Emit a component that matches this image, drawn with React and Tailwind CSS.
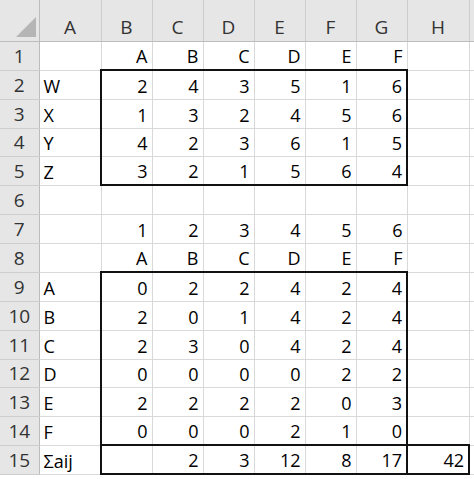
import React from "react";

const cols = ["A", "B", "C", "D", "E", "F", "G", "H", ""];
const colWidths = [
  "w-[39px]",
  "w-[62px]",
  "w-[51px]",
  "w-[51px]",
  "w-[51px]",
  "w-[51px]",
  "w-[51px]",
  "w-[51px]",
  "w-[62px]",
  "w-[60px]",
];
const rowHeights = [
  "h-[29px]", "h-[29px]", "h-[29px]", "h-[28px]", "h-[29px]",
  "h-[29px]", "h-[29px]", "h-[29px]", "h-[29px]", "h-[29px]",
  "h-[29px]", "h-[28px]", "h-[29px]", "h-[29px]", "h-[29px]",
];

const rows = [
  ["", "A", "B", "C", "D", "E", "F", "", ""],
  ["W", "2", "4", "3", "5", "1", "6", "", ""],
  ["X", "1", "3", "2", "4", "5", "6", "", ""],
  ["Y", "4", "2", "3", "6", "1", "5", "", ""],
  ["Z", "3", "2", "1", "5", "6", "4", "", ""],
  ["", "", "", "", "", "", "", "", ""],
  ["", "1", "2", "3", "4", "5", "6", "", ""],
  ["", "A", "B", "C", "D", "E", "F", "", ""],
  ["A", "0", "2", "2", "4", "2", "4", "", ""],
  ["B", "2", "0", "1", "4", "2", "4", "", ""],
  ["C", "2", "3", "0", "4", "2", "4", "", ""],
  ["D", "0", "0", "0", "0", "2", "2", "", ""],
  ["E", "2", "2", "2", "2", "0", "3", "", ""],
  ["F", "0", "0", "0", "2", "1", "0", "", ""],
  ["Σaij", "", "2", "3", "12", "8", "17", "42", ""],
];

// box ranges: [r1, r2, c1, c2]
const boxes = [
  [2, 5, 1, 6],
  [9, 14, 1, 6],
  [15, 15, 1, 6],
  [15, 15, 7, 7],
];

function boxClasses(r, c) {
  const out = [];
  for (const [r1, r2, c1, c2] of boxes) {
    if (r >= r1 && r <= r2 && c >= c1 && c <= c2) {
      if (r === r1) out.push("border-t-2 border-t-[#111]");
      if (r === r2) out.push("border-b-2 border-b-[#111]");
      if (c === c1) out.push("border-l-2 border-l-[#111]");
      if (c === c2) out.push("border-r-2 border-r-[#111]");
    }
  }
  return out.join(" ");
}

export default function App() {
  return (
    <div className="w-[474px] h-[479px] overflow-hidden bg-white font-['Open_Sans','Noto_Sans',sans-serif]">
      <table className="border-collapse table-fixed w-[528px]">
        <colgroup>
          {colWidths.map((w, i) => (
            <col key={i} className={w} />
          ))}
        </colgroup>
        <thead>
          <tr className="h-[41px]">
            <th className="bg-[#e6e6e6] border-r border-b border-r-[#bcbcbc] border-b-[#bcbcbc] p-0 align-bottom">
              <div className="flex justify-end pr-[3px] pb-[4px]">
                <svg width="20" height="20" viewBox="0 0 20 20">
                  <polygon points="0,20 20,20 20,0" fill="#b5b5b5" />
                </svg>
              </div>
            </th>
            {cols.map((c, i) => (
              <th
                key={i}
                className="bg-[#e6e6e6] border-r border-b border-r-[#cdcdcd] border-b-[#bcbcbc] p-0 pb-[3px] align-bottom text-center font-normal text-[19px] leading-[22px] text-[#333]"
              >
                {c}
              </th>
            ))}
          </tr>
        </thead>
        <tbody>
          {rows.map((row, ri) => {
            const r = ri + 1;
            return (
              <tr key={r} className={rowHeights[ri]}>
                <td className="bg-[#e6e6e6] border-r border-b border-r-[#bcbcbc] border-b-[#cdcdcd] p-0 text-center align-middle text-[19px] leading-[22px] text-[#333]">
                  {r}
                </td>
                {row.map((v, ci) => (
                  <td
                    key={ci}
                    className={`border border-[#d9d9d9] p-0 align-bottom text-[18px] leading-[20px] text-black pb-[3px] ${
                      ci > 0 ? "text-right pr-[4px]" : "text-left pl-[4px]"
                    } ${boxClasses(r, ci)}`}
                  >
                    {v}
                  </td>
                ))}
                <td className="border border-[#d9d9d9] p-0"></td>
              </tr>
            );
          })}
        </tbody>
      </table>
    </div>
  );
}
